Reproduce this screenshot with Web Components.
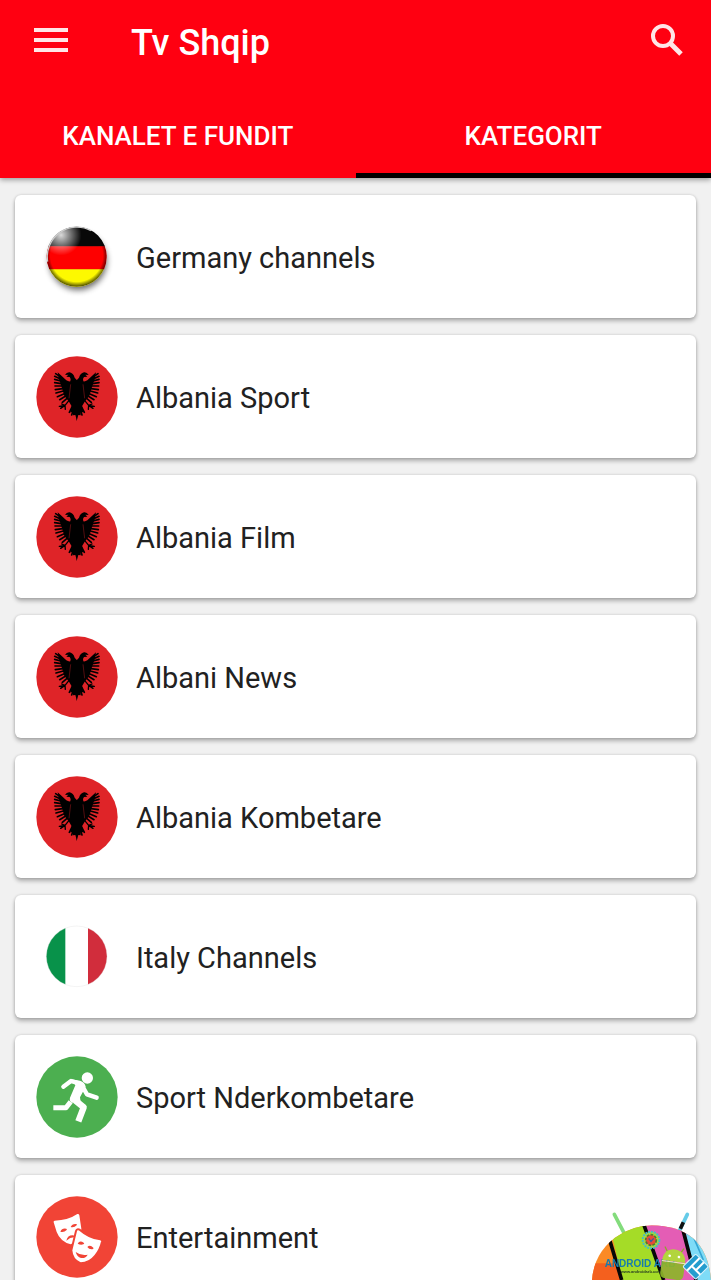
<!DOCTYPE html>
<html lang="sq">
<head>
<meta charset="utf-8">
<meta name="viewport" content="width=device-width, initial-scale=1">
<title>Tv Shqip</title>
<style>
  body {
    margin: 0;
    background: #f1f1f1;
    font-family: Roboto, "Liberation Sans", sans-serif;
  }
</style>
</head>
<body>
<tv-app></tv-app>

<script>
// every badge is 82px across, drawn on a 246 unit grid
const icons = {
  germany: /* html */ `
    <svg viewBox="0 0 246 246" aria-hidden="true">
      <defs>
        <clipPath id="ball"><circle cx="122" cy="122" r="90"/></clipPath>
        <radialGradient id="rim" cx="50%" cy="48%" r="52%">
          <stop offset="0.84" stop-color="#000" stop-opacity="0"/>
          <stop offset="1" stop-color="#000" stop-opacity="0.7"/>
        </radialGradient>
        <radialGradient id="gloss" cx="24%" cy="14%" r="34%">
          <stop offset="0" stop-color="#fff" stop-opacity="0.85"/>
          <stop offset="1" stop-color="#fff" stop-opacity="0"/>
        </radialGradient>
        <filter id="soft" x="-30%" y="-30%" width="160%" height="160%"><feGaussianBlur stdDeviation="9"/></filter>
      </defs>
      <circle cx="126" cy="136" r="86" fill="#000" opacity="0.6" filter="url(#soft)"/>
      <g clip-path="url(#ball)">
        <path fill="#080808" d="M20 20h210v72H20z"/>
        <path fill="#fe0000" d="M20 91h210v70H20z"/>
        <path fill="#fdf900" d="M20 160h210v70H20z"/>
        <circle cx="122" cy="122" r="90" fill="url(#rim)"/>
        <circle cx="122" cy="122" r="90" fill="url(#gloss)"/>
      </g>
      <path d="M35 137A89 89 0 0 1 165 44" fill="none" stroke="#ccc" stroke-width="4"/>
    </svg>`,
  albania: /* html */ `
    <svg viewBox="17 19 246 246" aria-hidden="true">
      <defs>
        <g id="half">
          <path d="M140 92l-7-8q-4-13-15-16-9-1-14 8l10-1-6 6 10 1q5 5 2 13-6 1-12-3L82 68l4 20 8 24 8 26 14 18 8 14-4 18 8 0 0 9 7-1 5 18z"/>
          <path d="M88 80L76 72M89 87l-16-7M91 94l-18-5M93 102l-20-3M95 109l-21 0M97 117l-22 3M99 124l-22 6M102 132l-21 9M106 139l-18 11M110 146l-14 12" stroke="#000" stroke-width="5" stroke-linecap="round" fill="none"/>
          <path d="M118 150l-14 17-17 3M104 167l-13 9M104 167l1 12M104 167l-10-4" stroke="#000" stroke-width="4" stroke-linecap="round" fill="none"/>
          <path d="M126 170l-9 18M130 178l-6 18" stroke="#000" stroke-width="5" stroke-linecap="round"/>
          <path d="M121 104l-5 42" stroke="#7c1518" stroke-width="2" fill="none"/>
        </g>
      </defs>
      <circle cx="140" cy="142" r="122" fill="#df2428"/>
      <use href="#half"/>
      <use href="#half" transform="translate(279 0) scale(-1 1)"/>
    </svg>`,
  italy: /* html */ `
    <svg viewBox="17 17 246 246" aria-hidden="true">
      <defs><clipPath id="disc"><circle cx="139" cy="138" r="91"/></clipPath></defs>
      <g clip-path="url(#disc)">
        <path fill="#fff" d="M40 40h200v200H40z"/>
        <path fill="#08924a" d="M40 40h65v200H40z"/>
        <path fill="#d12d3c" d="M173 40h65v200h-65z"/>
      </g>
      <circle cx="139" cy="138" r="91" fill="none" stroke="#ddd" stroke-width="1"/>
    </svg>`,
  sport: /* html */ `
    <svg viewBox="17 28 246 246" aria-hidden="true">
      <circle cx="140" cy="151" r="122" fill="#4caf50"/>
      <circle cx="171" cy="94" r="17" fill="#fff"/>
      <g fill="none" stroke="#fff" stroke-linejoin="round">
        <path d="M99 120l23-17 26 8" stroke-width="13" stroke-linecap="round"/>
        <path d="M158 122l12 21 29 10" stroke-width="13" stroke-linecap="round"/>
        <path d="M69 183h38l14-18" stroke-width="15"/>
        <path d="M134 161l26 21-16 42" stroke-width="19"/>
      </g>
      <path d="M124 98l25 4q15 5 17 18l-17 32 2 15-26 1q-9-5-6-15l16-37z" fill="#fff"/>
    </svg>`,
  masks: /* html */ `
    <svg viewBox="17 28 246 246" aria-hidden="true">
      <circle cx="140" cy="151" r="122" fill="#f14436"/>
      <path d="M73 102q40-1 68-20 5-1 6 4l6 40q0 37-32 47-31-8-42-37l-9-29q-1-4 3-5z" fill="#fff"/>
      <g fill="#f14436">
        <path d="M90 135q5-12 18-9 3 2 1 4-8 8-19 5zM121 121q5-11 17-9 3 1 1 4-8 8-18 5z"/>
        <path d="M108 162q4-17 20-16 7 1 8 6-15-2-28 10z"/>
      </g>
      <path d="M148 129q28 25 62 29 6 1 5 7-5 23-20 42-18 23-44 23-26-10-28-39l14-58q3-8 11-4z" fill="#fff" stroke="#f14436" stroke-width="6"/>
      <g fill="#f14436">
        <path d="M142 171q6-12 18-3 4 4-1 5-8 3-17-2zM171 181q8-9 18 2 2 4-3 5-10 1-15-7z"/>
        <path d="M136 196q16 12 36 8-6 12-20 10-12-3-16-18z"/>
      </g>
    </svg>`
};

class TvIconButton extends HTMLElement {
  static glyphs = {
    menu: `<path d="M0 2h34M0 12h34M0 22h34" transform="translate(4 8)" stroke="#fff" stroke-width="4" fill="none"/>`,
    search: `<g fill="none" stroke="#fff"><circle cx="16" cy="16" r="10" stroke-width="4"/><path d="M23 23l11 11" stroke-width="5"/></g>`
  };

  connectedCallback() {
    const shadowRoot = this.attachShadow({ mode: "open" });
    shadowRoot.innerHTML = /* html */ `
      <style>
        :host { display: block; }
        button {
          display: block;
          padding: 0;
          border: 0;
          background: none;
          cursor: pointer;
        }
        svg { display: block; width: 40px; height: 40px; opacity: 0.9; }
      </style>
      <button type="button" aria-label="${this.getAttribute("label")}">
        <svg viewBox="0 0 40 40" aria-hidden="true">${TvIconButton.glyphs[this.getAttribute("glyph")]}</svg>
      </button>`;
  }
}

class TvHeader extends HTMLElement {
  connectedCallback() {
    const shadowRoot = this.attachShadow({ mode: "open" });
    shadowRoot.innerHTML = /* html */ `
      <style>
        :host {
          display: block;
          flex: none;
          z-index: 1;
          background: #ff0011;
          color: #fff;
          box-shadow: 0 2px 5px rgba(0, 0, 0, 0.35);
        }
        .bar {
          display: flex;
          align-items: center;
          height: 80px;
          padding: 0 24px 0 30px;
        }
        h1 {
          flex: 1;
          margin: 0 0 0 61px;
          padding-top: 6px;
          font-size: 36px;
          line-height: 42px;
          font-weight: 500;
        }
      </style>
      <div class="bar">
        <tv-icon-button glyph="menu" label="Menu"></tv-icon-button>
        <h1><slot name="title"></slot></h1>
        <tv-icon-button glyph="search" label="Search"></tv-icon-button>
      </div>
      <slot></slot>`;
  }
}

class TvTabs extends HTMLElement {
  connectedCallback() {
    const shadowRoot = this.attachShadow({ mode: "open" });
    shadowRoot.innerHTML = /* html */ `
      <style>
        :host { display: block; }
        div { display: grid; grid-template-columns: 1fr 1fr; }
        button {
          height: 98px;
          padding: 18px 0 0;
          border: 0;
          border-bottom: 5px solid transparent;
          background: none;
          color: inherit;
          font: 500 26px/32px Roboto, "Liberation Sans", sans-serif;
          cursor: pointer;
        }
        button[aria-selected="true"] { border-bottom-color: #000; }
      </style>
      <div role="tablist">
        <button type="button" role="tab" aria-selected="false">KANALET E FUNDIT</button>
        <button type="button" role="tab" aria-selected="true">KATEGORIT</button>
      </div>`;

    const tabs = shadowRoot.querySelectorAll("button");
    tabs.forEach(tab => tab.addEventListener("click", () => {
      tabs.forEach(t => t.setAttribute("aria-selected", t === tab));
    }));
  }
}

class TvCategory extends HTMLElement {
  connectedCallback() {
    const shadowRoot = this.attachShadow({ mode: "open" });
    shadowRoot.innerHTML = /* html */ `
      <style>
        :host { display: block; flex: none; }
        a {
          display: flex;
          align-items: center;
          gap: 18px;
          height: 123px;
          padding: 0 21px;
          border-radius: 6px;
          background: #fff;
          box-shadow: 0 3px 4px rgba(0, 0, 0, 0.28), 0 0 3px rgba(0, 0, 0, 0.16);
          color: #212121;
          font-size: 29px;
          line-height: 36px;
          text-decoration: none;
        }
        svg { display: block; flex: none; width: 82px; height: 82px; }
        span { padding-top: 2px; }
      </style>
      <a href="#">${icons[this.getAttribute("icon")]}<span><slot></slot></span></a>`;
  }
}

class TvWatermark extends HTMLElement {
  connectedCallback() {
    const shadowRoot = this.attachShadow({ mode: "open" });
    shadowRoot.innerHTML = /* html */ `
      <style>
        :host {
          display: block;
          position: fixed;
          right: 0;
          bottom: 0;
          z-index: 2;
          pointer-events: none;
        }
        svg { display: block; width: 131px; height: 80px; }
        text { font-family: "Liberation Sans", sans-serif; }
      </style>
      <svg viewBox="0 0 393 240">
        <defs><clipPath id="dome"><path d="M36 240Q42 160 105 113Q155 77 215 76Q290 77 338 114Q386 155 393 240z"/></clipPath></defs>
        <path d="M103 43l27 52" stroke="#83dc7c" stroke-width="11" stroke-linecap="round"/>
        <path d="M322 43l-25 52" stroke="#65cbe8" stroke-width="11" stroke-linecap="round"/>
        <path d="M310 67l-9 19" stroke="#111" stroke-width="11"/>
        <g clip-path="url(#dome)">
          <path d="M0 60h393v180H0z" fill="#fb8a25"/>
          <path d="M0 190h125v50H0z" fill="#f4601e"/>
          <path d="M85 60h110l60 180H127z" fill="#a5dc27"/>
          <path d="M192 60h130l30 180H252z" fill="#e45db5"/>
          <path d="M308 60h85v180h-45z" fill="#7edcf7"/>
          <path d="M86 110l39 130M190 70l61 170M309 90l39 150" stroke="#080808" stroke-width="11"/>
          <path d="M340 110l30 70M362 120l26 66" stroke="#35a6d4" stroke-width="5"/>
        </g>
        <circle cx="213" cy="120" r="25" fill="#a4d83e" stroke="#45bfc3" stroke-width="6" stroke-dasharray="6 3"/>
        <circle cx="213" cy="120" r="16" fill="#e64b38" stroke="#4d7a2d" stroke-width="5" stroke-dasharray="8 4"/>
        <path d="M206 115l7 9 8-9" stroke="#345ca0" stroke-width="4" fill="none"/>
        <text x="74" y="200" font-size="30" font-weight="700" fill="#167cae">ANDROID ARB</text>
        <text x="122" y="220" font-size="12" font-weight="700" fill="#263b22">www.androidarb.com</text>
        <g transform="rotate(8 280 190)">
          <path d="M258 158l-9-13M298 156l7-13" stroke="#8ca82b" stroke-width="4" stroke-linecap="round"/>
          <path d="M245 184q2-35 34-36 33 1 36 36z" fill="#b2d53d"/>
          <path d="M245 188h70v34q0 16-17 16h-36q-17 0-17-16z" fill="#8db529" opacity="0.92"/>
          <path d="M245 186h70" stroke="#e8f5ad" stroke-width="3"/>
          <circle cx="266" cy="169" r="4" fill="#fff"/>
          <circle cx="294" cy="169" r="4" fill="#fff"/>
        </g>
        <g transform="translate(347 200) rotate(45)">
          <rect x="-27" y="-27" width="54" height="54" rx="4" fill="#249dce"/>
          <path d="M-10 -27V27M-10 7H27M8 -27V7" stroke="#fff" stroke-width="6" fill="none"/>
          <rect x="-27" y="-27" width="54" height="54" rx="4" fill="none" stroke="#d9f2fa" stroke-width="3"/>
        </g>
      </svg>`;
  }
}

class TvApp extends HTMLElement {
  #categories = [
    ["germany", "Germany channels"],
    ["albania", "Albania Sport"],
    ["albania", "Albania Film"],
    ["albania", "Albani News"],
    ["albania", "Albania Kombetare"],
    ["italy", "Italy Channels"],
    ["sport", "Sport Nderkombetare"],
    ["masks", "Entertainment"]
  ];

  connectedCallback() {
    const shadowRoot = this.attachShadow({ mode: "open" });
    shadowRoot.innerHTML = /* html */ `
      <style>
        :host {
          display: flex;
          flex-direction: column;
          height: 100vh;
        }
        main {
          display: flex;
          flex-direction: column;
          flex: 1;
          gap: 17px;
          min-height: 0;
          padding: 17px 15px;
          overflow-y: auto;
          scrollbar-width: none;
        }
      </style>
      <tv-header>
        <span slot="title">Tv Shqip</span>
        <tv-tabs></tv-tabs>
      </tv-header>
      <main>
        ${this.#categories.map(([icon, name]) => `<tv-category icon="${icon}">${name}</tv-category>`).join("")}
      </main>
      <tv-watermark></tv-watermark>`;
  }
}

customElements.define("tv-icon-button", TvIconButton);
customElements.define("tv-header", TvHeader);
customElements.define("tv-tabs", TvTabs);
customElements.define("tv-category", TvCategory);
customElements.define("tv-watermark", TvWatermark);
customElements.define("tv-app", TvApp);
</script>
</body>
</html>
